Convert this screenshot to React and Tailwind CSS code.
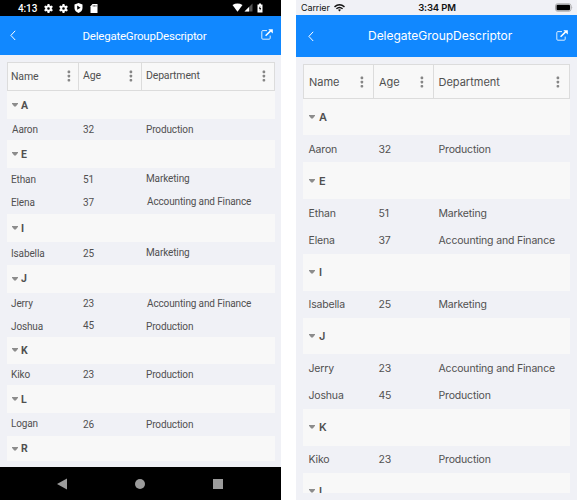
import React from 'react';

const androidGroups = [
  { key: 'A', h: 'h-[28px]', rows: [['Aaron', '32', 'Production', 'h-[21px]', 'pl-px', '', '']] },
  {
    key: 'E', h: 'h-[28px]', rows: [
      ['Ethan', '51', 'Marketing', 'h-[23px]', '', '', 'pb-[2px]'],
      ['Elena', '37', 'Accounting and Finance', 'h-[23px]', '', '', 'pb-[2px] pl-px'],
    ],
  },
  { key: 'I', h: 'h-[28px]', rows: [['Isabella', '25', 'Marketing', 'h-[22.5px]', 'pt-px', 'pt-px', 'pb-px']] },
  {
    key: 'J', h: 'h-[28px]', rows: [
      ['Jerry', '23', 'Accounting and Finance', 'h-[22px]', '', 'pt-px', 'pl-px'],
      ['Joshua', '45', 'Production', 'h-[22px]', 'pt-[2px]', 'pt-px', 'pt-[2px]'],
    ],
  },
  { key: 'K', h: 'h-[27.5px]', rows: [['Kiko', '23', 'Production', 'h-[21px]', '', '', '']] },
  { key: 'L', h: 'h-[28px]', rows: [['Logan', '26', 'Production', 'h-[23px]', 'pb-[2px]', '', '']] },
  { key: 'R', h: 'h-[25px]', rows: [] },
];

const iosGroups = [
  { key: 'A', h: 'h-[36px]', rows: [['Aaron', '32', 'Production', 'h-[27px]']] },
  {
    key: 'E', h: 'h-[37px]', rows: [
      ['Ethan', '51', 'Marketing', 'h-[27.5px]'],
      ['Elena', '37', 'Accounting and Finance', 'h-[27.5px]'],
    ],
  },
  { key: 'I', h: 'h-[36.5px]', rows: [['Isabella', '25', 'Marketing', 'h-[27px]']] },
  {
    key: 'J', h: 'h-[36.5px]', rows: [
      ['Jerry', '23', 'Accounting and Finance', 'h-[27.5px]'],
      ['Joshua', '45', 'Production', 'h-[27.5px]'],
    ],
  },
  { key: 'K', h: 'h-[36.5px]', rows: [['Kiko', '23', 'Production', 'h-[27.5px]']] },
  { key: 'L', h: 'h-[36.5px]', rows: [] },
];

function Dots({ className = '' }) {
  return (
    <svg className={'shrink-0 ' + className} width="4" height="12" viewBox="0 0 4 12" fill="#868686">
      <rect x="0.6" y="0.6" width="2.6" height="2.6" rx="0.8" />
      <rect x="0.6" y="4.8" width="2.6" height="2.6" rx="0.8" />
      <rect x="0.6" y="9" width="2.6" height="2.6" rx="0.8" />
    </svg>
  );
}

function Caret() {
  return (
    <svg className="shrink-0" width="6" height="4" viewBox="0 0 6 4">
      <path d="M0 0h6v.8L3.8 3.600h-1.600L0 .8z" fill="#8c8c8c" />
    </svg>
  );
}

function Back() {
  return (
    <svg width="6" height="11" viewBox="0 0 6 11" fill="none" stroke="#fff" strokeWidth="1">
      <path d="M5.2 0.8L0.9 5.4L5.2 10" />
    </svg>
  );
}

function OpenExternal() {
  return (
    <svg width="12" height="11" viewBox="0 0 12 11" fill="none" stroke="#fff">
      <path d="M6 1.6H1.8Q0.8 1.6 0.8 2.6V9.2Q0.8 10.2 1.8 10.2H8.2Q9.2 10.2 9.2 9.2V6.6" strokeWidth="1" strokeOpacity=".85" />
      <path d="M4.6 6.7L9.6 1.9" strokeWidth="1.5" />
      <path d="M7.3 0.2H11.8V4.5z" fill="#fff" stroke="none" />
    </svg>
  );
}

function Gear() {
  return (
    <svg width="9" height="9" viewBox="0 0 24 24" fill="#fff">
      <path fillRule="evenodd" d="M9.5 0h5l.7 3.7 2.3 1.4L21 3.8l2.7 4.4-2.9 2.4v2.8l2.9 2.4L21 20.2l-3.5-1.3-2.3 1.4-.7 3.7h-5l-.7-3.7-2.3-1.4L3 20.2.3 15.8l2.9-2.4v-2.8L.3 8.200 3 3.800l3.500 1.300 2.300-1.400zM12 8.500a3.500 3.500 0 1 0 0 7 3.500 3.500 0 0 0 0-7z" />
    </svg>
  );
}

function AndroidStatus() {
  return (
    <div className="flex h-4 shrink-0 items-center bg-black pl-[18px] pr-[17px] text-white">
      <span className="w-[26px] pt-px text-[10px] leading-3 font-medium tracking-[-0.1px]">4:13</span>
      <div className="flex items-center gap-[6px]">
        <Gear />
        <Gear />
        <svg width="9" height="10" viewBox="0 0 9 10">
          <path d="M4.500 0L8.500 1.500V5Q8.500 8.400 4.500 10Q.5 8.400 .5 5V1.500z" fill="#fff" />
          <path d="M3.200 2.600L6.500 4.700L3.200 6.800z" fill="#000" />
        </svg>
        <svg className="ml-[1px]" width="8" height="9" viewBox="0 0 8 9">
          <path d="M2.500 0H7.500V9H.5V2.300z" fill="#fff" />
          <path d="M3.200 1.200v1.400M4.600 1.200v1.400M6 1.200v1.400" stroke="#222" strokeWidth=".7" />
        </svg>
      </div>
      <svg className="ml-auto" width="32" height="10" viewBox="0 0 32 10">
        <path d="M.5 2Q5.500-.8 10.500 2L5.500 8.800z" fill="#fff" />
        <path d="M20.500 .5V8.500H12.500z" fill="#555" />
        <path d="M17 4V8.500H12.500z" fill="#fff" />
        <path d="M27 .5h2v1h1.500v8h-5v-8H27z" fill="#fff" />
        <path d="M28.200 2.800L26.800 5.700h1v2.300L29.200 5h-1z" fill="#000" />
      </svg>
    </div>
  );
}

function IosStatus() {
  return (
    <div className="grid h-[15px] shrink-0 grid-cols-[1fr_auto_1fr] items-center bg-[#f0f1f6] pl-[5px] pr-1 text-[9px] text-[#111]">
      <div className="flex items-center gap-1">
        <span className="tracking-[-0.1px]">Carrier</span>
        <svg width="11" height="8" viewBox="0 0 11 8" fill="none" stroke="#111" strokeWidth="1.500">
          <path d="M.5 2.800Q5.500-1.200 10.500 2.800" />
          <path d="M2.400 4.800Q5.500 2.200 8.600 4.800" />
          <path d="M4 5.800Q5.500 4.800 7 5.800L5.500 7.500z" fill="#111" stroke="none" />
        </svg>
      </div>
      <span className="pt-px text-[9.500px] font-semibold tracking-[-0.15px]">3:34 PM</span>
      <svg className="justify-self-end" width="18" height="9" viewBox="0 0 18 9">
        <rect x=".5" y=".8" width="15.500" height="7.400" rx="2" fill="none" stroke="#999" strokeWidth=".8" />
        <rect x="1.500" y="1.800" width="13.500" height="5.400" rx="1" fill="#000" />
        <path d="M16.700 3.200Q17.800 4.500 16.700 5.800z" fill="#888" />
      </svg>
    </div>
  );
}

function AndroidPhone() {
  return (
    <section className="flex h-[500px] w-[281px] shrink-0 flex-col bg-[#f0f1f6] font-['Roboto',sans-serif] text-[#505050]">
      <AndroidStatus />
      <header className="flex h-[38.5px] shrink-0 items-center bg-[#1188ff] pl-[10px] pr-2 text-white">
        <Back />
        <h1 className="ml-[66.500px] pt-[2px] text-[11.500px] leading-4 tracking-[-0.22px]">DelegateGroupDescriptor</h1>
        <div className="ml-auto pb-px"><OpenExternal /></div>
      </header>
      <div className="mx-[7px] mt-[7px] w-[268px] text-[10px] leading-3 tracking-[-0.13px]">
        <div className="grid h-[29.500px] grid-cols-[71px_63px_1fr] border border-[#dcdcdc] bg-[#f8f8f8] text-[10.500px] tracking-[-0.16px]">
          <div className="flex items-center justify-between border-r border-[#dcdcdc] pl-[3px] pr-[7px]"><span className="pt-px">Name</span><Dots /></div>
          <div className="flex items-center justify-between border-r border-[#dcdcdc] pl-1 pr-2"><span>Age</span><Dots /></div>
          <div className="flex items-center justify-between pl-1 pr-2"><span>Department</span><Dots /></div>
        </div>
        {androidGroups.map((g) => (
          <React.Fragment key={g.key}>
            <div className={'flex items-center gap-[3px] bg-[#f8f8f8] pl-[5px] text-[10.500px] font-bold ' + g.h}>
              <Caret /><span className="pt-px">{g.key}</span>
            </div>
            {g.rows.map(([name, age, dept, h, a, b, c]) => (
              <div key={name} className={'grid grid-cols-[72px_63px_1fr] items-center pl-1 whitespace-nowrap ' + h}>
                <span className={a}>{name}</span>
                <span className={b}>{age}</span>
                <span className={c}>{dept}</span>
              </div>
            ))}
          </React.Fragment>
        ))}
      </div>
      <nav className="mt-auto flex h-[33px] shrink-0 items-center justify-between bg-black pl-[57px] pr-[58px]">
        <svg width="10" height="12" viewBox="0 0 10 12"><path d="M10 .5V11.500L0 6z" fill="#9b9b9b" /></svg>
        <div className="size-[10px] rounded-full bg-[#9b9b9b]" />
        <div className="size-[10px] bg-[#9b9b9b]" />
      </nav>
    </section>
  );
}

function IosPhone() {
  return (
    <section className="flex h-[500px] w-[281px] shrink-0 flex-col bg-[#f0f1f6] font-['Inter',sans-serif] text-[#505050]">
      <IosStatus />
      <header className="flex h-[42px] shrink-0 items-center bg-[#1188ff] pl-[12px] pr-[9px] text-white">
        <Back />
        <h1 className="ml-[54px] text-[12px] leading-4 tracking-[-0.02px]">DelegateGroupDescriptor</h1>
        <div className="ml-auto pb-px"><OpenExternal /></div>
      </header>
      <div className="ml-[7px] mt-[7px] h-[428.500px] w-[267px] overflow-hidden text-[10.500px] leading-3 tracking-[-0.17px]">
        <div className="grid h-[35px] grid-cols-[70px_60px_1fr] border border-[#dcdcdc] bg-[#f8f8f8] text-[11px] tracking-normal">
          <div className="flex items-center justify-between border-r border-[#dcdcdc] pl-[5px] pr-[9px]">Name<Dots /></div>
          <div className="flex items-center justify-between border-r border-[#dcdcdc] pl-[5px] pr-[9px]">Age<Dots /></div>
          <div className="flex items-center justify-between pl-[4.500px] pr-[9px]">Department<Dots /></div>
        </div>
        {iosGroups.map((g) => (
          <React.Fragment key={g.key}>
            <div className={'flex items-center gap-[4px] bg-[#f8f8f8] pl-[6px] text-[11px] font-semibold ' + g.h}>
              <Caret />{g.key}
            </div>
            {g.rows.map(([name, age, dept, h]) => (
              <div key={name} className={'grid grid-cols-[70px_60px_1fr] items-center pt-[2px] pl-[5.500px] whitespace-nowrap ' + h}>
                <span>{name}</span>
                <span>{age}</span>
                <span>{dept}</span>
              </div>
            ))}
          </React.Fragment>
        ))}
      </div>
    </section>
  );
}

export default function App() {
  return (
    <main className="flex h-[500px] w-[577px] justify-between overflow-hidden bg-white">
      <AndroidPhone />
      <IosPhone />
    </main>
  );
}
